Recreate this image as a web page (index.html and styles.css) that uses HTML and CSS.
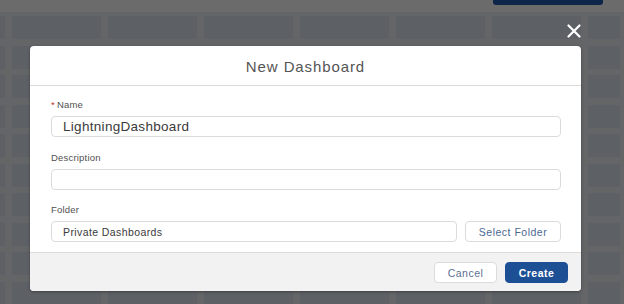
FILE: index.html
```html
<!DOCTYPE html>
<html>
<head>
<meta charset="utf-8">
<link rel="stylesheet" href="styles.css">
</head>
<body>
<div class="page">
  <div class="topbar"><div class="navbtn"></div></div>
  <div class="tiles">
    <div class="tile"></div><div class="tile"></div><div class="tile"></div><div class="tile"></div><div class="tile"></div><div class="tile"></div><div class="tile"></div><div class="tile"></div>
    <div class="tile"></div><div class="tile"></div><div class="tile"></div><div class="tile"></div><div class="tile"></div><div class="tile"></div><div class="tile"></div><div class="tile"></div>
    <div class="tile"></div><div class="tile"></div><div class="tile"></div><div class="tile"></div><div class="tile"></div><div class="tile"></div><div class="tile"></div><div class="tile"></div>
    <div class="tile"></div><div class="tile"></div><div class="tile"></div><div class="tile"></div><div class="tile"></div><div class="tile"></div><div class="tile"></div><div class="tile"></div>
    <div class="tile"></div><div class="tile"></div><div class="tile"></div><div class="tile"></div><div class="tile"></div><div class="tile"></div><div class="tile"></div><div class="tile"></div>
    <div class="tile"></div><div class="tile"></div><div class="tile"></div><div class="tile"></div><div class="tile"></div><div class="tile"></div><div class="tile"></div><div class="tile"></div>
    <div class="tile"></div><div class="tile"></div><div class="tile"></div><div class="tile"></div><div class="tile"></div><div class="tile"></div><div class="tile"></div><div class="tile"></div>
    <div class="tile"></div><div class="tile"></div><div class="tile"></div><div class="tile"></div><div class="tile"></div><div class="tile"></div><div class="tile"></div><div class="tile"></div>
    <div class="tile"></div><div class="tile"></div><div class="tile"></div><div class="tile"></div><div class="tile"></div><div class="tile"></div><div class="tile"></div><div class="tile"></div>
    <div class="tile"></div><div class="tile"></div><div class="tile"></div><div class="tile"></div><div class="tile"></div><div class="tile"></div><div class="tile"></div><div class="tile"></div>
  </div>

  <button class="close" aria-label="Close">
    <svg width="14" height="14" viewBox="0 0 14 14"><path d="M1.5 1.5 L12.5 12.5 M12.5 1.5 L1.5 12.5" stroke="#fff" stroke-width="2.2" stroke-linecap="round"/></svg>
  </button>

  <div class="modal">
    <div class="modal-header">New Dashboard</div>
    <div class="modal-body">
      <div class="field">
        <label class="label"><span class="req">*</span>Name</label>
        <div class="input input-name">LightningDashboard</div>
      </div>
      <div class="field">
        <label class="label">Description</label>
        <div class="input"></div>
      </div>
      <div class="field">
        <label class="label">Folder</label>
        <div class="folder-row">
          <div class="input input-folder">Private Dashboards</div>
          <button class="btn btn-neutral btn-select">Select Folder</button>
        </div>
      </div>
    </div>
    <div class="modal-footer">
      <button class="btn btn-neutral btn-cancel">Cancel</button>
      <button class="btn btn-brand">Create</button>
    </div>
  </div>
</div>
</body>
</html>
```
FILE: styles.css
```css
* { box-sizing: border-box; }
html, body { margin: 0; padding: 0; }
body {
  width: 624px;
  height: 304px;
  overflow: hidden;
  background: #646567;
  font-family: "Liberation Sans", Arial, sans-serif;
}
.page {
  position: relative;
  width: 624px;
  height: 304px;
  overflow: hidden;
}
.topbar {
  height: 12px;
  background: #6b6b6b;
  display: flex;
  padding-left: 493px;
}
.navbtn {
  width: 110px;
  height: 5px;
  background: #0d2548;
  border-radius: 0 0 3px 3px;
}
.tiles {
  display: grid;
  grid-template-columns: 5px repeat(6, 89px) 32px;
  column-gap: 7px;
  row-gap: 6.5px;
  grid-auto-rows: 23px;
  padding-top: 4px;
  background: #646567;
  overflow: hidden;
}
.tile { background: #5d6065; }

.close {
  position: absolute;
  left: 567px;
  top: 24px;
  width: 14px;
  height: 14px;
  padding: 0;
  border: 0;
  background: none;
  display: flex;
}

.modal {
  position: absolute;
  left: 30px;
  top: 46px;
  width: 551px;
  height: 245px;
  background: #fff;
  border-radius: 4px;
  box-shadow: 0 1px 3px rgba(0,0,0,0.35);
  display: flex;
  flex-direction: column;
  overflow: hidden;
}
.modal-header {
  height: 40px;
  border-bottom: 1px solid #dcdbda;
  display: flex;
  align-items: center;
  justify-content: center;
  font-size: 15px;
  letter-spacing: 0.9px;
  color: #555555;
  padding-top: 1px;
}
.modal-body {
  flex: 1;
  padding: 13px 20px 0 21px;
  display: flex;
  flex-direction: column;
  gap: 14.5px;
}
.field { display: flex; flex-direction: column; gap: 5px; }
.label {
  font-size: 9.5px;
  color: #4f4f4f;
  letter-spacing: 0.2px;
  line-height: 12px;
}
.req { color: #c23934; margin-right: 2px; }
.input {
  height: 21px;
  border: 1px solid #dddbda;
  border-radius: 4px;
  background: #fff;
  padding-left: 11px;
  display: flex;
  align-items: center;
  color: #3a3a3a;
}
.input-name { font-size: 13.5px; letter-spacing: 0.3px; }
.input-folder { font-size: 10.5px; letter-spacing: 0.4px; flex: 1; }
.folder-row { display: flex; gap: 8px; }
.btn {
  font-family: "Liberation Sans", Arial, sans-serif;
  height: 21px;
  border-radius: 4px;
  font-size: 10.5px;
  letter-spacing: 0.5px;
  padding: 0;
  display: flex;
  align-items: center;
  justify-content: center;
}
.btn-neutral {
  background: #fff;
  border: 1px solid #dddbda;
  color: #4b6894;
}
.btn-select { width: 96px; }
.modal-footer {
  height: 39px;
  border-top: 1px solid #dcdbda;
  background: #f3f2f2;
  display: flex;
  justify-content: flex-end;
  align-items: flex-start;
  gap: 8px;
  padding: 9px 13px 0 0;
}
.btn-cancel { width: 63px; color: #5a6f91; }
.btn-brand {
  width: 63px;
  background: #1d4f95;
  border: 1px solid #1d4f95;
  color: #fff;
  font-weight: bold;
}
```
